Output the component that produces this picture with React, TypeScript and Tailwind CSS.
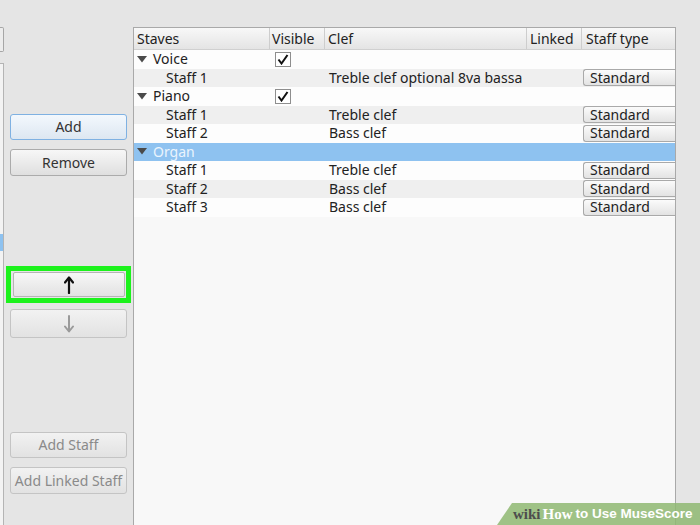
import React from "react";

const font = { fontFamily: '"Noto Sans", "Open Sans", sans-serif' };

type Row = {
  kind: "group" | "staff";
  name: string;
  clef?: string;
  visible?: boolean;
  selected?: boolean;
};

const rows: Row[] = [
  { kind: "group", name: "Voice", visible: true },
  { kind: "staff", name: "Staff 1", clef: "Treble clef optional 8va bassa" },
  { kind: "group", name: "Piano", visible: true },
  { kind: "staff", name: "Staff 1", clef: "Treble clef" },
  { kind: "staff", name: "Staff 2", clef: "Bass clef" },
  { kind: "group", name: "Organ", selected: true },
  { kind: "staff", name: "Staff 1", clef: "Treble clef" },
  { kind: "staff", name: "Staff 2", clef: "Bass clef" },
  { kind: "staff", name: "Staff 3", clef: "Bass clef" },
];

function Tri() {
  return (
    <svg width="10" height="7" viewBox="0 0 10 7" className="shrink-0">
      <polygon points="0,0 10,0 5,6.5" fill="#4a4a4a" />
    </svg>
  );
}

function Check() {
  return (
    <div className="w-[16px] h-[15px] border border-[#8e8e8e] bg-white flex items-center justify-center">
      <svg width="12" height="11" viewBox="0 0 12 11">
        <path d="M1.5 5.5 L4.5 9.5 L10.5 1" stroke="#111" strokeWidth="2" fill="none" strokeLinejoin="miter" />
      </svg>
    </div>
  );
}

function Combo() {
  return (
    <div className="h-[17px] w-full border border-r-0 border-[#a9a9a9] rounded-l-[3px] bg-gradient-to-b from-[#fbfbfb] to-[#e3e3e3] pl-[6px] flex items-center text-[14px] text-[#222] leading-none">
      Standard
    </div>
  );
}

function Btn({
  children,
  disabled,
  focus,
  h,
}: {
  children: React.ReactNode;
  disabled?: boolean;
  focus?: boolean;
  h: string;
}) {
  const base =
    "w-[117px] rounded-[3px] border flex items-center justify-center text-[14px] leading-none " + h;
  const look = focus
    ? " border-[#7fb1e2] bg-gradient-to-b from-[#f3f8fd] to-[#dde7f1] text-[#333]"
    : disabled
    ? " border-[#c4c4c4] bg-gradient-to-b from-[#f2f2f2] to-[#e2e2e2] text-[#8a8a8a]"
    : " border-[#ababab] bg-gradient-to-b from-[#f7f7f7] to-[#dfdfdf] text-[#333]";
  return <div className={base + look}>{children}</div>;
}

function Arrow({ up, color }: { up?: boolean; color: string }) {
  return (
    <svg width="10" height="18" viewBox="0 0 10 18">
      {up ? (
        <>
          <path d="M5 2 L5 17" stroke={color} strokeWidth="2.2" strokeLinecap="round" />
          <path d="M1 6.5 L5 1.5 L9 6.5" stroke={color} strokeWidth="2.2" fill="none" strokeLinecap="round" strokeLinejoin="round" />
        </>
      ) : (
        <>
          <path d="M5 1 L5 16" stroke={color} strokeWidth="2" strokeLinecap="round" />
          <path d="M1 11.5 L5 16.5 L9 11.5" stroke={color} strokeWidth="2" fill="none" strokeLinecap="round" strokeLinejoin="round" />
        </>
      )}
    </svg>
  );
}

export default function App() {
  const cols = "grid grid-cols-[136px_55px_202px_55px_93px]";
  return (
    <div
      className="relative w-[700px] h-[525px] overflow-hidden bg-[#e5e5e5] flex text-[#222]"
      style={font}
    >
      {/* left edge remnants */}
      <div className="w-[4px] flex flex-col">
        <div className="mt-[27px] h-[25px] border border-l-0 border-[#a6a6a6] rounded-r-[2px] bg-[#ececec]" />
        <div className="mt-[11px] flex-1 border border-l-0 border-b-0 border-[#b4b4b4] bg-[#f3f3f3] flex flex-col">
          <div className="mt-[170px] h-[17px] bg-[#8ec2f0]" />
        </div>
      </div>

      {/* button column */}
      <div className="w-[129px] flex flex-col pl-[6px]">
        <div className="mt-[114px]">
          <Btn focus h="h-[26px]">Add</Btn>
        </div>
        <div className="mt-[9px]">
          <Btn h="h-[27px]">Remove</Btn>
        </div>
        <div className="mt-[90px] -ml-[4px] w-[125px] h-[37px] border-[5px] border-[#1cf21c] flex items-center justify-center">
          <div className="w-[112px] h-[25px] rounded-[2px] border border-[#b5b5b5] bg-gradient-to-b from-[#f7f7f7] to-[#e2e2e2] flex items-center justify-center">
            <Arrow up color="#111" />
          </div>
        </div>
        <div className="mt-[6px]">
          <Btn disabled h="h-[29px]">
            <Arrow color="#9a9a9a" />
          </Btn>
        </div>
        <div className="mt-[94px]">
          <Btn disabled h="h-[26px]">Add Staff</Btn>
        </div>
        <div className="mt-[9px]">
          <Btn disabled h="h-[27px]">Add Linked Staff</Btn>
        </div>
      </div>

      {/* tree */}
      <div className="mt-[27px] w-[543px] h-[510px] border border-b-0 border-[#a9a9a9] bg-[#f8f8f8] flex flex-col">
        <div className={cols + " h-[22px] bg-gradient-to-b from-[#f8f8f8] to-[#e4e4e4] border-b border-[#d0d0d0] text-[14px] leading-none"}>
          <div className="pl-[3px] flex items-center border-r border-[#cdcdcd]">Staves</div>
          <div className="pl-[2px] flex items-center border-r border-[#cdcdcd]">Visible</div>
          <div className="pl-[3px] flex items-center border-r border-[#cdcdcd]">Clef</div>
          <div className="pl-[3px] flex items-center border-r border-[#cdcdcd]">Linked</div>
          <div className="pl-[4px] flex items-center">Staff type</div>
        </div>
        {rows.map((r, i) => {
          const bg = r.selected ? "bg-[#8ec2f0]" : i % 2 === 0 ? "bg-[#fdfdfd]" : "bg-[#efefef]";
          return (
            <div key={i} className={cols + " h-[18.5px] text-[14px] leading-none " + bg}>
              <div className="flex items-center">
                {r.kind === "group" ? (
                  <div className="flex items-center pl-[3px] gap-[6px]">
                    <Tri />
                    <span className={r.selected ? "text-[#eaf4fd]" : ""}>{r.name}</span>
                  </div>
                ) : (
                  <span className="pl-[32px]">{r.name}</span>
                )}
              </div>
              <div className="flex items-center pl-[5px]">{r.visible ? <Check /> : null}</div>
              <div className="flex items-center pl-[4px] whitespace-nowrap">{r.clef ?? ""}</div>
              <div />
              <div className="flex items-center pl-[1px]">{r.kind === "staff" ? <Combo /> : null}</div>
            </div>
          );
        })}
      </div>

      {/* wikiHow watermark */}
      <div className="absolute right-0 bottom-0 w-[203px] h-[22px] bg-[#8fb872]/85 [clip-path:polygon(15px_0,100%_0,100%_100%,0_100%)] flex items-center pl-[16px] whitespace-nowrap">
        <span className="text-[15px] font-bold text-[#4d4d4d] leading-none" style={{ fontFamily: '"Liberation Serif", serif' }}>
          wiki
        </span>
        <span className="ml-[2px] text-[15px] font-bold text-white leading-none" style={{ fontFamily: '"Liberation Serif", serif' }}>
          How
        </span>
        <span className="ml-[3px] text-[13.5px] font-bold text-white leading-none" style={{ fontFamily: '"Liberation Sans", Arial, sans-serif' }}>
          to Use MuseScore
        </span>
      </div>
    </div>
  );
}
